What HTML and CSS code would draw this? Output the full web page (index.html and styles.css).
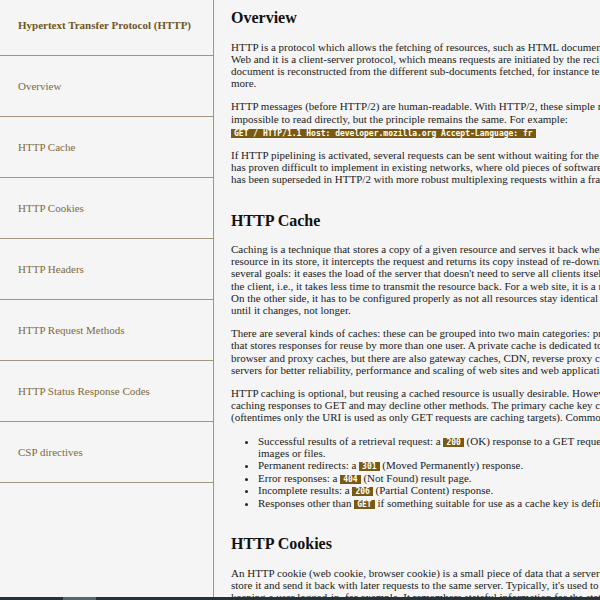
FILE: index.html
```html
<!DOCTYPE html>
<html lang="en">
<head>
<meta charset="utf-8">
<title>HTTP</title>
<link rel="stylesheet" href="styles.css">
</head>
<body>
<div class="page">
  <nav class="sidebar">
    <header class="nav-title">Hypertext Transfer Protocol (HTTP)</header>
    <ul class="nav-list">
      <li><a class="nav-link" href="#overview">Overview</a></li>
      <li><a class="nav-link" href="#cache">HTTP Cache</a></li>
      <li><a class="nav-link" href="#cookies">HTTP Cookies</a></li>
      <li><a class="nav-link" href="#headers">HTTP Headers</a></li>
      <li><a class="nav-link" href="#methods">HTTP Request Methods</a></li>
      <li><a class="nav-link" href="#status">HTTP Status Response Codes</a></li>
      <li><a class="nav-link" href="#csp">CSP directives</a></li>
    </ul>
  </nav>
  <main class="main">
    <section class="section" id="overview">
      <h2 class="heading">Overview</h2>
      <p class="text">HTTP is a protocol which allows the fetching of resources, such as HTML documents. It is the foundation of any data exchange on the Web and it is a client-server protocol, which means requests are initiated by the recipient, usually the Web browser. A complete document is reconstructed from the different sub-documents fetched, for instance text, layout description, images, videos, scripts, and more.</p>
      <p class="text">HTTP messages (before HTTP/2) are human-readable. With HTTP/2, these simple messages are encapsulated in frames, making them impossible to read directly, but the principle remains the same. For example: <code class="code code-block">GET / HTTP/1.1 Host: developer.mozilla.org Accept-Language: fr</code></p>
      <p class="text">If HTTP pipelining is activated, several requests can be sent without waiting for the first response to be fully received. HTTP pipelining has proven difficult to implement in existing networks, where old pieces of software coexist with modern versions. HTTP pipelining has been superseded in HTTP/2 with more robust multiplexing requests within a frame.</p>
    </section>
    <section class="section" id="cache">
      <h2 class="heading">HTTP Cache</h2>
      <p class="text">Caching is a technique that stores a copy of a given resource and serves it back when requested. When a web cache has a requested resource in its store, it intercepts the request and returns its copy instead of re-downloading from the originating server. This achieves several goals: it eases the load of the server that doesn't need to serve all clients itself, and it improves performance by being closer to the client, i.e., it takes less time to transmit the resource back. For a web site, it is a major component in achieving high performance. On the other side, it has to be configured properly as not all resources stay identical forever: it is important to cache a resource only until it changes, not longer.</p>
      <p class="text">There are several kinds of caches: these can be grouped into two main categories: private or shared caches. A shared cache is a cache that stores responses for reuse by more than one user. A private cache is dedicated to a single user. This page will mostly talk about browser and proxy caches, but there are also gateway caches, CDN, reverse proxy caches and load balancers that are deployed on web servers for better reliability, performance and scaling of web sites and web applications.</p>
      <p class="text">HTTP caching is optional, but reusing a cached resource is usually desirable. However, common HTTP caches are typically limited to caching responses to GET and may decline other methods. The primary cache key consists of the request method and target URI (oftentimes only the URI is used as only GET requests are caching targets). Common forms of caching entries are:</p>
      <ul class="list">
        <li>Successful results of a retrieval request: a <code class="code">200</code> (OK) response to a GET request containing a resource like HTML documents, images or files.</li>
        <li>Permanent redirects: a <code class="code">301</code> (Moved Permanently) response.</li>
        <li>Error responses: a <code class="code">404</code> (Not Found) result page.</li>
        <li>Incomplete results: a <code class="code">206</code> (Partial Content) response.</li>
        <li>Responses other than <code class="code">GET</code> if something suitable for use as a cache key is defined.</li>
      </ul>
    </section>
    <section class="section" id="cookies">
      <h2 class="heading">HTTP Cookies</h2>
      <p class="text">An HTTP cookie (web cookie, browser cookie) is a small piece of data that a server sends to the user's web browser. The browser may store it and send it back with later requests to the same server. Typically, it's used to tell if two requests came from the same browser — keeping a user logged-in, for example. It remembers stateful information for the stateless HTTP protocol.</p>
    </section>
  </main>
</div>
<div class="hscroll"><div class="hscroll-thumb"></div></div>
</body>
</html>
```
FILE: styles.css
```css
html, body {
  margin: 0;
  padding: 0;
}
body {
  background: #f5f5f5;
  overflow: hidden;
  font-family: "Liberation Serif", "Times New Roman", serif;
  color: #222;
}
.page {
  display: flex;
  margin-top: -5px;
}
.sidebar {
  flex: none;
  width: 213px;
  min-height: calc(100vh + 5px);
  border-right: 1px solid #a3957f;
  background: #f5f5f5;
  font-size: 11px;
}
.nav-title {
  height: 60px;
  display: flex;
  align-items: center;
  padding-left: 18px;
  border-bottom: 1px solid #a3957f;
  font-weight: bold;
  color: #6e5727;
}
.nav-list {
  list-style: none;
  margin: 0;
  padding: 0;
}
.nav-link {
  height: 60px;
  display: flex;
  align-items: center;
  padding-left: 18px;
  border-bottom: 1px solid #a3957f;
  color: #7f6a3c;
  text-decoration: none;
}
.main {
  flex: none;
  width: 54.52em;
  padding: 1px 17px 0 17px;
  font-size: 11px;
  line-height: 12.2px;
}
.section {
  display: flow-root;
  padding-bottom: 2px;
}
.heading {
  font-size: 16px;
  line-height: 18px;
  font-weight: bold;
  color: #111;
  margin: 13.3px 0;
}
.text {
  margin: 11px 0;
}
.list {
  margin: 11px 0;
  padding-left: 27px;
}
.list li {
  line-height: 12.4px;
}
.code {
  font-family: "DejaVu Sans Mono", "Liberation Mono", monospace;
  font-weight: bold;
  font-size: 8px;
  line-height: 8px;
  background: #7a5a12;
  color: #fff;
  padding: 0 3px;
}
.code-block {
  display: block;
  width: fit-content;
  margin-top: 4px;
  line-height: 9px;
}
.hscroll {
  position: fixed;
  left: 0;
  right: 0;
  bottom: 0;
  height: 3px;
  background: #263238;
}
.hscroll-thumb {
  margin-left: 63px;
  width: 33px;
  height: 100%;
  background: #56666d;
}
```
